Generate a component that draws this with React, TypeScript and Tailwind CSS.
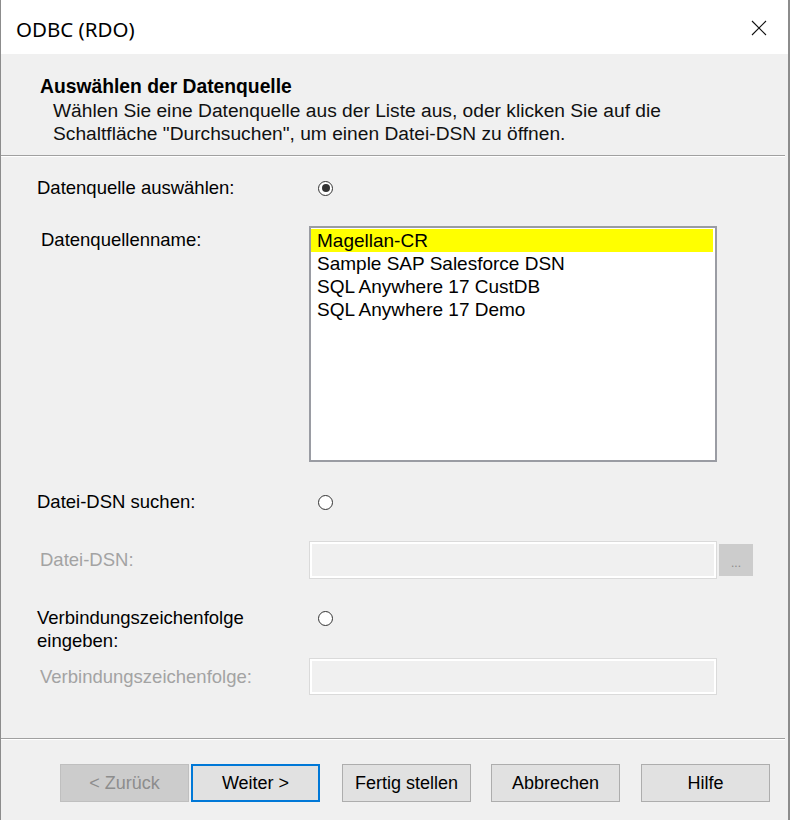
import React from 'react';

const Radio = ({ checked = false }: { checked?: boolean }) => (
  <span className="w-[15px] h-[15px] rounded-full border border-[#333333] bg-white flex items-center justify-center shrink-0">
    {checked && <span className="w-[8px] h-[8px] rounded-full bg-[#333333]" />}
  </span>
);

const DisabledInput = ({ height }: { height: string }) => (
  <div className={`w-[408px] ${height} border border-[#dadada] p-[2px] bg-white`}>
    <div className="w-full h-full bg-[#f0f0f0]" />
  </div>
);

const Separator = () => (
  <div className="mr-[3px]">
    <div className="h-px bg-[#a0a0a0]" />
    <div className="h-px bg-white" />
  </div>
);

const sources = [
  'Magellan-CR',
  'Sample SAP Salesforce DSN',
  'SQL Anywhere 17 CustDB',
  'SQL Anywhere 17 Demo',
];

const App: React.FC = () => {
  return (
    <div
      className="w-[790px] h-[820px] bg-[#f0f0f0] border-l border-r-2 border-[#8c8c8c] flex flex-col text-black overflow-hidden"
      style={{ fontFamily: '"Liberation Sans", Arial, sans-serif' }}
    >
      {/* Title bar */}
      <div className="h-[54px] bg-white flex items-center justify-between pl-[15px] pr-[21px] shrink-0">
        <span className="text-[20.5px] pt-[4px]" style={{ fontFamily: '"Noto Sans", "Open Sans", sans-serif' }}>
          ODBC (RDO)
        </span>
        <svg width="16" height="16" viewBox="0 0 16 16" className="mt-[2px]">
          <path d="M1 1 L15 15 M15 1 L1 15" stroke="#111" strokeWidth="1.1" fill="none" />
        </svg>
      </div>

      {/* Header */}
      <div className="h-[101px] pl-[39px] pt-[22px] shrink-0">
        <div className="text-[19.3px] font-bold leading-[22px]">Auswählen der Datenquelle</div>
        <div className="pl-[13px] text-[19.2px] leading-[23px] mt-[1px] text-[#111]">
          <div>Wählen Sie eine Datenquelle aus der Liste aus, oder klicken Sie auf die</div>
          <div>Schaltfläche "Durchsuchen", um einen Datei-DSN zu öffnen.</div>
        </div>
      </div>
      <Separator />

      {/* Body */}
      <div className="pl-[36px] text-[18.5px]">
        {/* Datenquelle auswählen */}
        <div className="mt-[19px] h-[24px] flex items-center">
          <div className="w-[272px]">Datenquelle auswählen:</div>
          <div className="ml-[9px]">
            <Radio checked />
          </div>
        </div>

        {/* Datenquellenname + list */}
        <div className="mt-[26px] flex">
          <div className="w-[272px] pl-[4px] pt-[2px] leading-[24px]">Datenquellenname:</div>
          <div className="w-[408px] h-[236px] border-2 border-[#9a9ca3] bg-white pt-px pr-[2px]">
            {sources.map((s, i) => (
              <div
                key={s}
                className={`h-[23px] leading-[23px] pl-[6px] text-[19px] ${i === 0 ? 'bg-[#ffff00]' : ''}`}
              >
                {s}
              </div>
            ))}
          </div>
        </div>

        {/* Datei-DSN suchen */}
        <div className="mt-[28px] h-[24px] flex items-center">
          <div className="w-[272px]">Datei-DSN suchen:</div>
          <div className="ml-[9px]">
            <Radio />
          </div>
        </div>

        {/* Datei-DSN */}
        <div className="mt-[27px] flex items-center">
          <div className="w-[272px] pl-[3px] text-[#a3a3a3]">Datei-DSN:</div>
          <DisabledInput height="h-[38px]" />
          <div className="ml-[2px] w-[34px] h-[32px] bg-[#cccccc] flex items-center justify-center text-[12px] text-[#8a8a8a] leading-none pt-[6px]">
            ...
          </div>
        </div>

        {/* Verbindungszeichenfolge eingeben */}
        <div className="mt-[27px] flex items-start">
          <div className="w-[272px] leading-[23px]">
            Verbindungszeichenfolge
            <br />
            eingeben:
          </div>
          <div className="ml-[9px] mt-[5px]">
            <Radio />
          </div>
        </div>

        {/* Verbindungszeichenfolge */}
        <div className="mt-[6px] flex items-center">
          <div className="w-[272px] pl-[3px] text-[#a3a3a3]">Verbindungszeichenfolge:</div>
          <DisabledInput height="h-[37px]" />
        </div>
      </div>

      <div className="mt-[43px]">
        <Separator />
      </div>

      {/* Buttons */}
      <div className="mt-[24px] pl-[59px] flex text-[18px]">
        <button className="w-[129px] h-[38px] bg-[#cccccc] border border-[#bfbfbf] text-[#8d8d8d]">
          &lt; Zurück
        </button>
        <button className="ml-[2px] w-[129px] h-[38px] bg-[#e1e1e1] border-2 border-[#0078d7]">
          Weiter &gt;
        </button>
        <button className="ml-[22px] w-[129px] h-[38px] bg-[#e1e1e1] border border-[#adadad]">
          Fertig stellen
        </button>
        <button className="ml-[20px] w-[129px] h-[38px] bg-[#e1e1e1] border border-[#adadad]">
          Abbrechen
        </button>
        <button className="ml-[21px] w-[129px] h-[38px] bg-[#e1e1e1] border border-[#adadad]">
          Hilfe
        </button>
      </div>
    </div>
  );
};

export default App;
